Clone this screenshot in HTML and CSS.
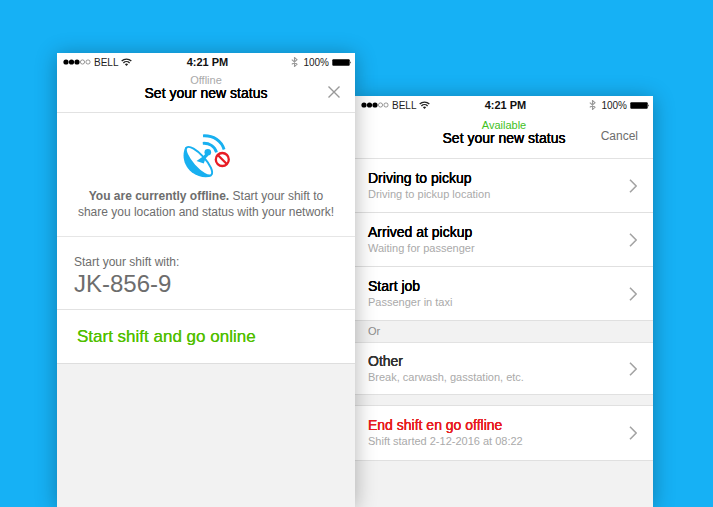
FILE: index.html
```html
<!DOCTYPE html>
<html lang="en">
<head>
    <meta charset="UTF-8">
    <meta name="viewport" content="width=device-width, initial-scale=1.0">
    <title>Set your new status</title>
    <link rel="stylesheet" href="styles.css">
</head>
<body>
    <!-- Shared icons -->
    <svg class="sprite" aria-hidden="true">
        <symbol id="signal" viewBox="0 0 28 6">
            <circle cx="3" cy="3" r="2.6" fill="#000"/>
            <circle cx="8.5" cy="3" r="2.6" fill="#000"/>
            <circle cx="14" cy="3" r="2.6" fill="#000"/>
            <circle cx="19.5" cy="3" r="2.1" fill="none" stroke="#555" stroke-width=".6"/>
            <circle cx="25" cy="3" r="2.1" fill="none" stroke="#555" stroke-width=".6"/>
        </symbol>
        <symbol id="wifi" viewBox="0 0 11 8">
            <path d="M.7 3.1a6.8 6.8 0 0 1 9.6 0M2.4 4.9a4.4 4.4 0 0 1 6.2 0" fill="none" stroke="#222" stroke-width="1.4"/>
            <path d="M3.9 6.2a2.3 2.3 0 0 1 3.2 0L5.5 7.9z" fill="#222"/>
        </symbol>
        <symbol id="bluetooth" viewBox="0 0 7 10">
            <path d="M.8 2.6 6 7.3 3.5 9.5V.5L6 2.7.8 7.4" fill="none" stroke="#999" stroke-width="1.1"/>
        </symbol>
        <symbol id="battery" viewBox="0 0 20 7">
            <rect x=".3" y=".3" width="17.4" height="6.4" rx="1" fill="#000"/>
            <path d="M18.4 2.2q1.4 1.3 0 2.6z" fill="#000"/>
        </symbol>
        <symbol id="chevron" viewBox="0 0 8 14">
            <path d="M1 .8 7.200 7 1 13.200" fill="none" stroke="#a3a3a3" stroke-width="1.6"/>
        </symbol>
    </svg>

    <main class="screens">
        <section class="phone phone-front">
            <div class="statusbar">
                <div class="carrier">
                    <svg width="28" height="6"><use href="#signal"/></svg>
                    <span>BELL</span>
                    <svg width="11" height="8"><use href="#wifi"/></svg>
                </div>
                <b>4:21 PM</b>
                <div class="power">
                    <svg width="7" height="10"><use href="#bluetooth"/></svg>
                    <span>100%</span>
                    <svg width="20" height="7"><use href="#battery"/></svg>
                </div>
            </div>
            <header class="header">
                <p class="state">Offline</p>
                <h1>Set your new status</h1>
                <button class="close" aria-label="Close">
                    <svg width="12" height="12" viewBox="0 0 12 12"><path d="M.5.5l11 11M11.5.5l-11 11" stroke="#999" stroke-width="1.4"/></svg>
                </button>
            </header>
            <div class="notice">
                <svg width="48" height="46" viewBox="0 0 48 46" aria-hidden="true">
                    <!-- dish -->
                    <path d="M3.5 14C-.5 22 1.500 33 10 39.500 16.500 44.300 24.500 45.300 30 43z" fill="#18b0f0"/>
                    <ellipse cx="17" cy="28.200" rx="18.400" ry="6.200" transform="rotate(48 17 28.200)" fill="#fff" stroke="#18b0f0" stroke-width="2"/>
                    <path d="M14.500 28 21 23.500 24 20 26.500 22.500 23.500 25.500 21.800 30.500z" fill="#18b0f0"/>
                    <circle cx="25.800" cy="19.300" r="3.300" fill="#18b0f0"/>
                    <!-- waves -->
                    <path d="M20.800 10.300C27.300 9.800 32.800 13.300 34.500 19.300M21 2.800C31.500 2.200 39.600 8 42.100 16.500" fill="none" stroke="#18b0f0" stroke-width="2.800"/>
                    <circle cx="40.300" cy="26.500" r="8.600" fill="#fff"/>
                    <circle cx="40.300" cy="26.500" r="6.500" fill="none" stroke="#e81c24" stroke-width="2.300"/>
                    <path d="M35.800 22 44.800 31" stroke="#e81c24" stroke-width="2.300"/>
                </svg>
                <p><b>You are currently offline.</b> Start your shift to<br>share you location and status with your network!</p>
            </div>
            <div class="vehicle">
                <p>Start your shift with:</p>
                <strong>JK-856-9</strong>
            </div>
            <button class="start">Start shift and go online</button>
        </section>

        <section class="phone phone-back">
            <div class="statusbar">
                <div class="carrier">
                    <svg width="28" height="6"><use href="#signal"/></svg>
                    <span>BELL</span>
                    <svg width="11" height="8"><use href="#wifi"/></svg>
                </div>
                <b>4:21 PM</b>
                <div class="power">
                    <svg width="7" height="10"><use href="#bluetooth"/></svg>
                    <span>100%</span>
                    <svg width="20" height="7"><use href="#battery"/></svg>
                </div>
            </div>
            <header class="header">
                <p class="state available">Available</p>
                <h1>Set your new status</h1>
                <button class="cancel">Cancel</button>
            </header>
            <button class="row">
                <span class="label"><span class="name">Driving to pickup</span><span class="info">Driving to pickup location</span></span>
                <svg width="8" height="14"><use href="#chevron"/></svg>
            </button>
            <button class="row">
                <span class="label"><span class="name">Arrived at pickup</span><span class="info">Waiting for passenger</span></span>
                <svg width="8" height="14"><use href="#chevron"/></svg>
            </button>
            <button class="row">
                <span class="label"><span class="name">Start job</span><span class="info">Passenger in taxi</span></span>
                <svg width="8" height="14"><use href="#chevron"/></svg>
            </button>
            <h2 class="divider">Or</h2>
            <button class="row other">
                <span class="label"><span class="name">Other</span><span class="info">Break, carwash, gasstation, etc.</span></span>
                <svg width="8" height="14"><use href="#chevron"/></svg>
            </button>
            <button class="row end">
                <span class="label"><span class="name">End shift en go offline</span><span class="info">Shift started 2-12-2016 at 08:22</span></span>
                <svg width="8" height="14"><use href="#chevron"/></svg>
            </button>
        </section>
    </main>
</body>
</html>
```
FILE: styles.css
```css
* {
    box-sizing: border-box;
}
body {
    margin: 0;
    background: #16b1f5;
    font-family: "Liberation Sans", Arial, sans-serif;
    font-size: 11px;
    color: #6d6d6d;
}
p, h1, h2 {
    margin: 0;
}
button {
    border: none;
    background: none;
    padding: 0;
    font: inherit;
    color: inherit;
    cursor: pointer;
}
svg {
    display: block;
    flex: none;
}
.sprite {
    position: absolute;
    width: 0;
    height: 0;
}
.screens {
    display: flex;
    height: 100vh;
    padding: 0 60px 0 57px;
    overflow: hidden;
}
.phone {
    flex: 1;
    background: #f2f2f2;
    box-shadow: 0 2px 20px rgba(0, 0, 0, 0.3);
}
.phone-front {
    position: relative;
    z-index: 1;
    margin-top: 53px;
}
.phone-back {
    margin-top: 96px;
}
.statusbar {
    display: grid;
    grid-template-columns: 1fr auto 1fr;
    align-items: center;
    height: 18px;
    padding: 0 3px 0 6px;
    background: #fff;
    color: #222;
}
.statusbar b {
    color: #111;
}
.carrier, .power {
    display: flex;
    align-items: center;
    gap: 3px;
    font-size: 10px;
}
.power {
    justify-content: flex-end;
}
.power span {
    margin-left: 2px;
}
.header {
    position: relative;
    height: 42px;
    padding-top: 3px;
    border-bottom: 1px solid #e2e2e2;
    background: #fff;
    text-align: center;
}
.phone-back .header {
    height: 45px;
    padding-top: 5px;
}
.state {
    line-height: 12px;
    color: #aaa;
}
.available {
    color: #3fc11e;
}
.header h1 {
    font-size: 14px;
    font-weight: normal;
    line-height: 14px;
    color: #000;
    text-shadow: 0 0 0 currentColor, 0 0 0 currentColor;
}
.close, .cancel {
    position: absolute;
    right: 15px;
    top: 15px;
}
.cancel {
    font-size: 12px;
}
.notice {
    display: flex;
    flex-direction: column;
    align-items: center;
    gap: 9px;
    padding: 20px 0 16px;
    border-bottom: 1px solid #e6e6e6;
    background: #fff;
    font-size: 12px;
    text-align: center;
    line-height: 16px;
}
.vehicle {
    padding: 18px 17px 10px;
    border-bottom: 1px solid #e2e2e2;
    background: #fff;
}
.vehicle p {
    font-size: 12px;
    line-height: 14px;
}
.vehicle strong {
    display: block;
    font-size: 24px;
    font-weight: normal;
    line-height: 30px;
}
.start {
    display: block;
    width: 100%;
    height: 54px;
    padding: 0 20px;
    border-bottom: 1px solid #dedede;
    background: #fff;
    font-size: 17px;
    color: #51bf00;
    text-align: left;
    text-shadow: 0 0 0 currentColor;
}
.row {
    display: flex;
    align-items: center;
    justify-content: space-between;
    width: 100%;
    height: 54px;
    padding: 0 16px 0 13px;
    border-bottom: 1px solid #e0e0e0;
    background: #fff;
    text-align: left;
}
.label {
    display: flex;
    flex-direction: column;
}
.name {
    font-size: 14px;
    line-height: 16px;
    color: #000;
    text-shadow: 0 0 0 currentColor, 0 0 0 currentColor;
}
.info {
    line-height: 16px;
    color: #aaa;
}
.divider {
    padding: 0 13px;
    border-bottom: 1px solid #e2e2e2;
    font-size: 11px;
    font-weight: normal;
    line-height: 21px;
    color: #8c8c8c;
}
.other {
    height: 52px;
}
.other .name {
    color: #333;
}
.end {
    margin-top: 10px;
    height: 56px;
    border-top: 1px solid #e0e0e0;
}
.end .name {
    color: #e81c20;
}
```
